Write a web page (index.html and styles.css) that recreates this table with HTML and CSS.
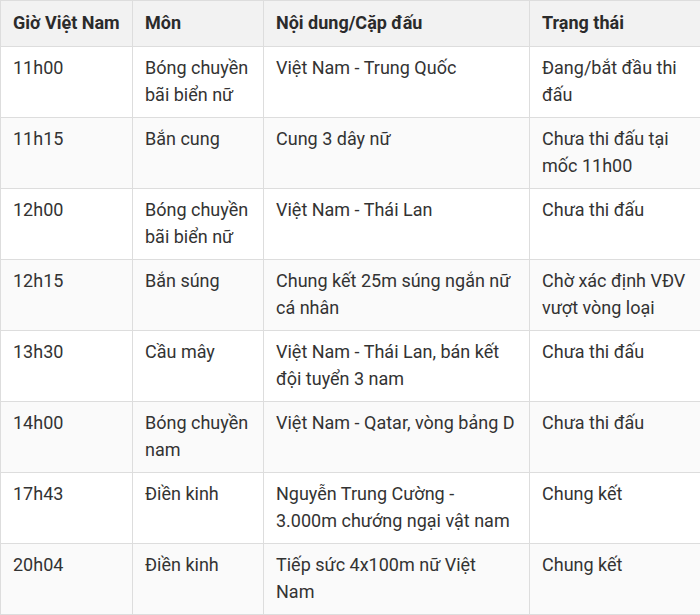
FILE: index.html
```html
<!DOCTYPE html>
<html lang="vi">
<head>
<meta charset="utf-8">
<link rel="stylesheet" href="styles.css">
</head>
<body>
<table class="schedule">
  <colgroup>
    <col class="c1"><col class="c2"><col class="c3"><col class="c4">
  </colgroup>
  <thead>
    <tr><th>Giờ Việt Nam</th><th>Môn</th><th>Nội dung/Cặp đấu</th><th>Trạng thái</th></tr>
  </thead>
  <tbody>
    <tr><td>11h00</td><td>Bóng chuyền bãi biển nữ</td><td>Việt Nam - Trung Quốc</td><td>Đang/bắt đầu thi đấu</td></tr>
    <tr><td>11h15</td><td>Bắn cung</td><td>Cung 3 dây nữ</td><td>Chưa thi đấu tại mốc 11h00</td></tr>
    <tr><td>12h00</td><td>Bóng chuyền bãi biển nữ</td><td>Việt Nam - Thái Lan</td><td>Chưa thi đấu</td></tr>
    <tr><td>12h15</td><td>Bắn súng</td><td>Chung kết 25m súng ngắn nữ cá nhân</td><td>Chờ xác định VĐV vượt vòng loại</td></tr>
    <tr><td>13h30</td><td>Cầu mây</td><td>Việt Nam - Thái Lan, bán kết đội tuyển 3 nam</td><td>Chưa thi đấu</td></tr>
    <tr><td>14h00</td><td>Bóng chuyền nam</td><td>Việt Nam - Qatar, vòng bảng D</td><td>Chưa thi đấu</td></tr>
    <tr><td>17h43</td><td>Điền kinh</td><td>Nguyễn Trung Cường - 3.000m chướng ngại vật nam</td><td>Chung kết</td></tr>
    <tr><td>20h04</td><td>Điền kinh</td><td>Tiếp sức 4x100m nữ Việt Nam</td><td>Chung kết</td></tr>
  </tbody>
</table>
</body>
</html>
```
FILE: styles.css
```css
html, body {
  margin: 0;
  padding: 0;
  background: #ffffff;
}
.schedule {
  width: 700px;
  border-collapse: collapse;
  table-layout: fixed;
  font-family: Roboto, "Noto Sans", sans-serif;
  font-size: 18px;
  line-height: 27px;
  color: #333333;
}
.c1 { width: 132px; }
.c2 { width: 131px; }
.c3 { width: 266px; }
.c4 { width: 171px; }
.schedule th,
.schedule td {
  border: 1px solid #dddddd;
  text-align: left;
  vertical-align: top;
  padding: 7px 12px 9px;
}
.schedule th {
  background: #f2f2f2;
  font-weight: 700;
  padding-top: 8px;
  padding-bottom: 10px;
  color: #2b2b2b;
}
.schedule tbody tr:nth-child(even) td {
  background: #fafafa;
}
```
